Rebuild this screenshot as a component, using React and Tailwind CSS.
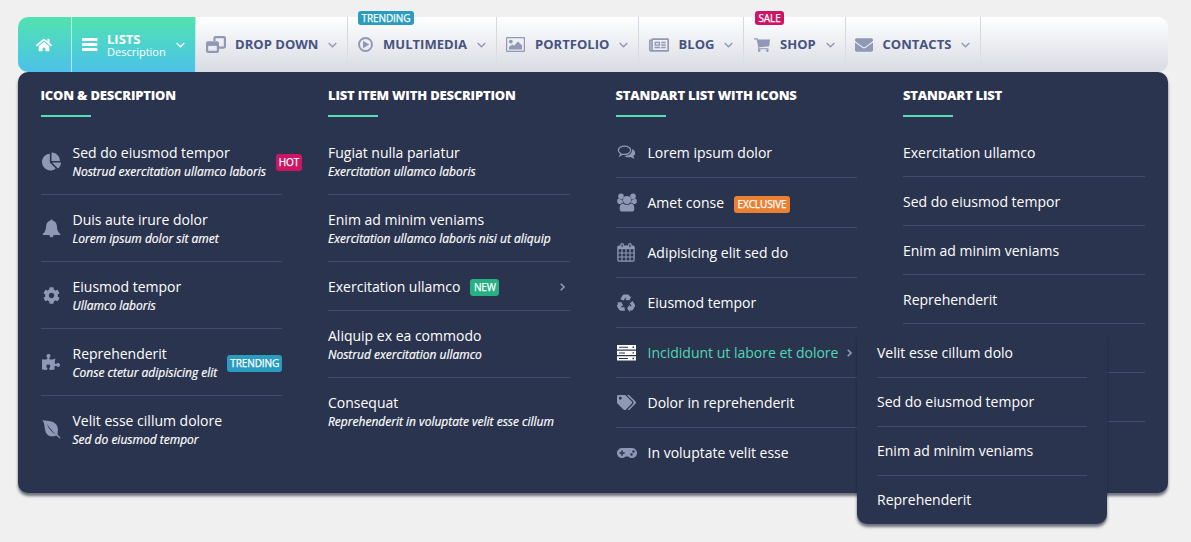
import React from "react";
import {
  FaHome, FaRegNewspaper, FaEnvelope, FaChartPie, FaCog,
  FaPuzzlePiece, FaTags, FaGamepad,
} from "react-icons/fa";

const Bars = () => (
  <svg width="16" height="14" viewBox="0 0 16 14" fill="currentColor">
    <rect y="0" width="15.500" height="3" rx="0.700" />
    <rect y="5" width="15.500" height="3" rx="0.700" />
    <rect y="10" width="15.500" height="3" rx="0.700" />
  </svg>
);

const Windows = () => (
  <svg width="20" height="17" viewBox="0 0 20 17" fill="none" stroke="currentColor" strokeWidth="2.2">
    <path d="M8.5 5V2.1Q8.5 1.1 9.6 1.1H17.8Q18.900 1.1 18.900 2.1V10.6Q18.900 11.6 17.800 11.6H12.5" />
    <rect x="1.1" y="6.4" width="10.8" height="9.5" rx="0.800" />
    <path d="M1.500 8.400H11.500" strokeWidth="3" />
  </svg>
);

const PlayCircle = () => (
  <svg width="15" height="15" viewBox="0 0 15 15" fill="currentColor">
    <circle cx="7.500" cy="7.500" r="6.500" fill="none" stroke="currentColor" strokeWidth="1.900" />
    <path d="M5 3.800L11.400 7.500L5 11.200Z" />
  </svg>
);

const Picture = () => (
  <svg width="19" height="15" viewBox="0 0 19 15" fill="currentColor">
    <rect x="0.6" y="0.6" width="17.8" height="13.8" rx="0.4" fill="none" stroke="currentColor" strokeWidth="1.200" />
    <circle cx="4.800" cy="4.600" r="1.900" />
    <path d="M3 12.500V10L6.200 7.600L8 8.800L12 4.400L16 8.400V12.500Z" />
  </svg>
);

const Cart = () => (
  <svg width="16" height="14" viewBox="0 0 16 14" fill="currentColor">
    <path d="M0 0.300H3.400L4 1.600H16L15.200 8.300L5.200 9.200V10.200H14.400V11.300H4.200V8.600L2.600 1.500H0Z" />
    <circle cx="5.200" cy="12.600" r="1.300" />
    <circle cx="13.400" cy="12.600" r="1.300" />
  </svg>
);

const Bell = () => (
  <svg width="19" height="19" viewBox="0 0 19 19" fill="currentColor">
    <path d="M9.500 0.400C10.200 0.400 10.600 0.900 10.500 1.600C13.200 2.200 14.700 4.300 14.900 7.200C15.100 10.700 15.900 13.200 18.200 14.800V15.900H11.500C11.500 17.500 10.700 18.300 9.500 18.300C8.300 18.300 7.500 17.500 7.500 15.900H0.800V14.800C3.100 13.200 3.900 10.700 4.100 7.200C4.300 4.300 5.800 2.200 8.500 1.600C8.400 0.900 8.800 0.400 9.500 0.400Z" />
  </svg>
);

const Comments = () => (
  <svg width="19" height="15" viewBox="0 0 18.500 15" fill="currentColor">
    <path d="M7.200 1.100C3.900 1.100 1.100 2.900 1.100 5.300C1.100 6.700 2 7.800 3.500 8.600L2.800 10.700L5.200 9.300C9.700 10 13.400 8.100 13.400 5.300C13.400 2.900 10.600 1.100 7.200 1.100Z" fill="none" stroke="currentColor" strokeWidth="1.300" />
    <path d="M14.800 4.100C18.600 5.700 18.900 9.200 16 11.100C16.200 12.400 17 13 17.600 13.600C15.900 13.700 14.400 13 13.500 12.100C10.800 12.600 8.300 12 6.900 10.900C11.900 11 15.500 8.100 14.800 4.100Z" />
  </svg>
);

const Users = () => (
  <svg width="20" height="19" viewBox="0 0 20 19" fill="currentColor">
    <circle cx="4" cy="3.200" r="2.800" />
    <circle cx="16" cy="3.200" r="2.800" />
    <path d="M0.200 8.200C0.200 6.400 0.900 5.400 1.800 5.500C3.200 6.800 4.800 6.700 5.400 6.300C5.300 7.700 5.800 8.800 6.400 9.600C5 9.700 4.200 10.200 3.700 10.900H2.200C0.900 10.900 0.200 10.200 0.200 8.200Z" />
    <path d="M19.800 8.200C19.800 6.400 19.100 5.400 18.200 5.500C16.800 6.800 15.200 6.700 14.600 6.300C14.700 7.700 14.200 8.800 13.600 9.600C15 9.700 15.800 10.200 16.300 10.900H17.800C19.100 10.900 19.800 10.200 19.800 8.200Z" />
    <circle cx="10" cy="6.900" r="4" />
    <path d="M6 10.400C7.500 12.300 12.500 12.300 14 10.400C16.600 10.400 17.300 12.800 17.300 15.700C17.300 17.800 16.200 18.600 14.600 18.600H5.400C3.800 18.600 2.700 17.800 2.700 15.700C2.700 12.800 3.400 10.400 6 10.400Z" />
  </svg>
);

const Calendar = () => (
  <svg width="18" height="19" viewBox="0 0 18 19" fill="none" stroke="currentColor">
    <rect x="0.900" y="3.200" width="16.200" height="14.900" rx="1" strokeWidth="1.300" />
    <path d="M1 4.600H17" strokeWidth="3.200" />
    <path d="M1 10H17M1 14H17M5 6V18M9 6V18M13 6V18" strokeWidth="1.100" />
    <rect x="3.900" y="0.700" width="2.400" height="4.200" rx="1.100" strokeWidth="1.200" className="fill-[#2b344e]" />
    <rect x="11.700" y="0.700" width="2.400" height="4.200" rx="1.100" strokeWidth="1.200" className="fill-[#2b344e]" />
  </svg>
);

const recycleArm = "M3.400 5.200L5.500 1.600Q6.100 0.500 7.300 0.500H10.700Q11.700 0.500 12.200 1.400L13.100 2.900L14.500 2.100L12.500 6.300L7.900 6L9.400 5.100L8.400 3.400L6.700 6.500Z";

const Recycle = () => (
  <svg width="19" height="18" viewBox="0 0 19 18" fill="currentColor">
    <path d={recycleArm} />
    <path d={recycleArm} transform="rotate(120 9 9.600)" />
    <path d={recycleArm} transform="rotate(240 9 9.600)" />
  </svg>
);

const Server = () => (
  <svg width="19" height="16" viewBox="0 0 19 16" fill="currentColor">
    <path fillRule="evenodd" d="M0 0H19V4.500H0ZM2 1.800V2.800H11V1.800ZM15.500 1.600V3H17V1.600ZM0 5.700H19V10H0ZM2 7.400V8.400H8V7.400ZM15.500 7.200V8.600H17V7.200ZM0 11.200H19V15.600H0ZM2 13V14H11V13ZM15.500 12.800V14.200H17V12.800Z" />
  </svg>
);

const Leaf = () => (
  <svg width="19" height="19" viewBox="0 0 19 19" fill="currentColor">
    <path fillRule="evenodd" d="M0.300 0.300C7 0.900 12.500 1.300 14.900 5.500C16.500 8.500 15.900 11.800 15.400 14.300L18.700 18L17.700 18.500L14.300 15.400C10 17.300 5.700 16.300 4 12.700C2 8.300 3.200 3.300 0.300 0.300ZM4.800 3.800C6.500 8.200 9.500 12.400 13.900 14.700C10.500 11.600 7.700 7.800 4.800 3.800Z" />
  </svg>
);

const Down = () => (
  <svg width="9" height="6" viewBox="0 0 9 6" fill="none" stroke="currentColor" strokeWidth="1.350">
    <path d="M0.700 0.900L4.500 4.700L8.300 0.900" />
  </svg>
);

const Right = () => (
  <svg width="5" height="8" viewBox="0 0 5 8" fill="none" stroke="currentColor" strokeWidth="1.600">
    <path d="M0.700 0.700L4 4L0.700 7.300" />
  </svg>
);

const badgeColors = {
  HOT: "bg-[#cc1664]",
  SALE: "bg-[#cc1664]",
  NEW: "bg-[#26b084]",
  EXCLUSIVE: "bg-[#ea8132]",
  TRENDING: "bg-[#2a9cc0]",
};

function Badge({ label, className = "" }) {
  return (
    <span className={`shrink-0 rounded-[3px] text-center text-[10px] tracking-[-0.100px] text-white [-webkit-text-stroke:0.25px_white] ${badgeColors[label]} ${className}`}>
      {label}
    </span>
  );
}

const navItems = [
  { label: "DROP DOWN", width: "w-[152px]", icon: <Windows />, box: "w-[29px]" },
  { label: "MULTIMEDIA", width: "w-[149px]", icon: <PlayCircle />, box: "w-[25px]", badge: "TRENDING", badgePlace: "left-[10px] w-[56px]" },
  { label: "PORTFOLIO", width: "w-[142px]", icon: <Picture />, box: "w-[29px]", nudge: "-ml-px" },
  { label: "BLOG", width: "w-[105px]", icon: <FaRegNewspaper size={20} />, box: "w-[29.5px]" },
  { label: "SHOP", width: "w-[102px]", icon: <Cart />, box: "w-[26px]", badge: "SALE", badgePlace: "left-[11px] w-[29px]" },
  { label: "CONTACTS", width: "w-[135px]", icon: <FaEnvelope size={18} />, box: "w-[27.5px]", nudge: "-ml-px" },
];

function NavItem({ label, width, icon, box, badge, badgePlace, nudge = "" }) {
  return (
    <li className={`relative flex h-full items-center pr-[10px] pl-[10px] ${width}`}>
      <span className={`flex shrink-0 text-[#8f99b5] ${nudge} ${box}`}>{icon}</span>
      <span className="text-[13px] font-bold tracking-[0.030px] whitespace-nowrap text-[#465381]">{label}</span>
      <span className="ml-auto pr-px text-[#8f99b5]"><Down /></span>
      {badge && <Badge label={badge} className={`absolute -top-[6px] h-[14px] leading-[14px] ${badgePlace}`} />}
      <span className="absolute top-0 right-0 h-full w-px bg-linear-to-b from-[#d5d8e2] via-[#d5d8e2] to-transparent" />
    </li>
  );
}

function Row({ title, desc, icon, badge, badgeWidth, badgeTop = "", arrow, active, tall, sub, last, children }) {
  return (
    <li className={`relative flex items-center border-[#3e4c72] ${tall || sub ? "py-[14px]" : "pt-[15px] pb-[13px]"} ${last ? "" : "border-b"}`}>
      {icon && <span className={`flex w-[32px] shrink-0 items-center pl-px ${tall ? "" : "-mt-[2px]"} ${active ? "text-white" : "text-[#8f99b5]"}`}>{icon}</span>}
      <span className="block whitespace-nowrap">
        <span className={`block text-[14px] ${tall ? "leading-[21px]" : "leading-[20px]"} ${active ? "text-[#4fd8b4]" : "text-white"}`}>{title}</span>
        {desc && <span className="block text-[12px] leading-[18px] text-white italic [-webkit-text-stroke:0.2px_white]">{desc}</span>}
      </span>
      {badge && <Badge label={badge} className={`ml-[10px] h-[17px] leading-[17px] ${badgeTop} ${badgeWidth}`} />}
      {arrow && <span className="ml-auto pr-[5px] text-[#8f99b5]"><Right /></span>}
      {children}
    </li>
  );
}

function Column({ title, children }) {
  return (
    <section className="min-w-0 pt-[13px] pr-[23.5px] pl-[22.5px]">
      <h2 className="text-[13px] leading-[20px] font-extrabold tracking-[-0.190px] whitespace-nowrap text-white">{title}</h2>
      <div className="mt-[10px] h-[2px] w-[50px] bg-[#52e0b4]" />
      <ul className="pt-[11px]">{children}</ul>
    </section>
  );
}

export default function App() {
  return (
    <div className="h-[542px] w-full overflow-hidden bg-[#f0f0f0] px-[18px] pt-[17px] font-['Open_Sans',sans-serif]">
      <div className="w-[1150px]">
        <nav>
          <ul className="flex h-[55px] rounded-[10px] bg-linear-to-b from-white to-[#d8dbe3]">
            <li className="flex w-[54px] items-center justify-center rounded-l-[10px] border-r border-white/60 bg-linear-to-b from-[#52e2ae] to-[#4dc1e8] pr-px text-white">
              <FaHome size={16} />
            </li>
            <li className="flex w-[124px] items-center border-r border-white/60 bg-linear-to-b from-[#52e2ae] to-[#4dc1e8] pr-[10px] pl-[10px] text-white">
              <span className="w-[25px]"><Bars /></span>
              <span className="pt-px">
                <span className="block text-[13px] leading-[13px] font-bold">LISTS</span>
                <span className="block text-[11px] leading-[12px]">Description</span>
              </span>
              <span className="ml-auto"><Down /></span>
            </li>
            {navItems.map((item) => <NavItem key={item.label} {...item} />)}
          </ul>
        </nav>

        <div className="grid h-[421px] grid-cols-4 rounded-[10px] bg-[#2b344e] shadow-[0_3px_3px_0_rgba(20,26,48,0.6)]">
          <Column title="ICON & DESCRIPTION">
            <Row title="Sed do eiusmod tempor" desc="Nostrud exercitation ullamco laboris" icon={<FaChartPie size={19} />} badge="HOT" badgeWidth="w-[26px]" />
            <Row title="Duis aute irure dolor" desc="Lorem ipsum dolor sit amet" icon={<Bell />} />
            <Row title="Eiusmod tempor" desc="Ullamco laboris" icon={<FaCog size={17} className="ml-px" />} />
            <Row title="Reprehenderit" desc="Conse ctetur adipisicing elit" icon={<FaPuzzlePiece size={18} />} badge="TRENDING" badgeWidth="w-[55px]" />
            <Row title="Velit esse cillum dolore" desc="Sed do eiusmod tempor" icon={<Leaf />} last />
          </Column>
          <Column title="LIST ITEM WITH DESCRIPTION">
            <Row title="Fugiat nulla pariatur" desc="Exercitation ullamco laboris" />
            <Row title="Enim ad minim veniams" desc="Exercitation ullamco laboris nisi ut aliquip" />
            <Row title="Exercitation ullamco" badge="NEW" badgeWidth="w-[29px]" arrow />
            <Row title="Aliquip ex ea commodo" desc="Nostrud exercitation ullamco" />
            <Row title="Consequat" desc="Reprehenderit in voluptate velit esse cillum" last />
          </Column>
          <Column title="STANDART LIST WITH ICONS">
            <Row tall title="Lorem ipsum dolor" icon={<Comments />} />
            <Row tall title="Amet conse" icon={<Users />} badge="EXCLUSIVE" badgeWidth="w-[56px]" badgeTop="mt-[3px]" />
            <Row tall title="Adipisicing elit sed do" icon={<Calendar />} />
            <Row tall title="Eiusmod tempor" icon={<Recycle />} />
            <Row tall title="Incididunt ut labore et dolore" icon={<Server />} arrow active>
              <ul className="absolute top-px left-[241.5px] z-10 w-[250px] rounded-[10px] bg-[#2b344e] px-[20px] shadow-[0_3px_3px_0_rgba(20,26,48,0.6)]">
                <Row sub title="Velit esse cillum dolo" />
                <Row sub title="Sed do eiusmod tempor" />
                <Row sub title="Enim ad minim veniams" />
                <Row sub title="Reprehenderit" last />
              </ul>
            </Row>
            <Row tall title="Dolor in reprehenderit" icon={<FaTags size={19} />} />
            <Row tall title="In voluptate velit esse" icon={<FaGamepad size={20} />} last />
          </Column>
          <Column title="STANDART LIST">
            <Row title="Exercitation ullamco" />
            <Row title="Sed do eiusmod tempor" />
            <Row title="Enim ad minim veniams" />
            <Row title="Reprehenderit" />
            <Row title={"\u00a0"} />
            <Row title={"\u00a0"} />
          </Column>
        </div>
      </div>
    </div>
  );
}
